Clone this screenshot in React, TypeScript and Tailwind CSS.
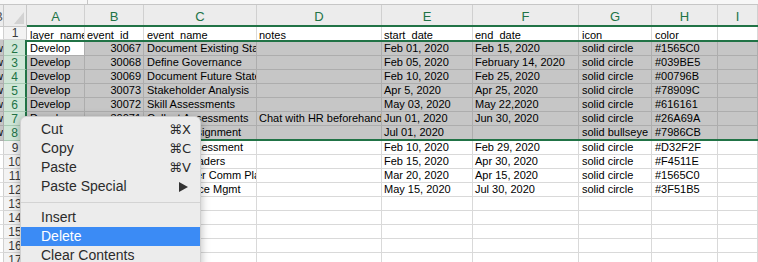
import React from 'react';

const W = ['w-[58px]', 'w-[59px]', 'w-[113px]', 'w-[125px]', 'w-[91px]', 'w-[106px]', 'w-[73px]', 'w-[66px]', 'flex-1'];
const PL = ['pl-[3px]', 'pl-[2px] pr-[2px]', 'pl-[3px]', 'pl-[2px]', 'pl-[2px]', 'pl-[2px]', 'pl-[3px]', 'pl-[3px]', 'pl-[2px]'];
const LETTERS = ['A', 'B', 'C', 'D', 'E', 'F', 'G', 'H', 'I'];

const HEAD = ['layer_name', 'event_id', 'event_name', 'notes', 'start_date', 'end_date', 'icon', 'color', ''];

const SELECTED: string[][] = [
    ['Develop', '30067', 'Document Existing State', '', 'Feb 01, 2020', 'Feb 15, 2020', 'solid circle', '#1565C0', ''],
    ['Develop', '30068', 'Define Governance', '', 'Feb 05, 2020', 'February 14, 2020', 'solid circle', '#039BE5', ''],
    ['Develop', '30069', 'Document Future State', '', 'Feb 10, 2020', 'Feb 25, 2020', 'solid circle', '#00796B', ''],
    ['Develop', '30073', 'Stakeholder Analysis', '', 'Apr 5, 2020', 'Apr 25, 2020', 'solid circle', '#78909C', ''],
    ['Develop', '30072', 'Skill Assessments', '', 'May 03, 2020', 'May 22,2020', 'solid circle', '#616161', ''],
    ['Develop', '30071', 'Collect Assessments', 'Chat with HR beforehand', 'Jun 01, 2020', 'Jun 30, 2020', 'solid circle', '#26A69A', ''],
    ['Develop', '30074', 'Mentor Assignment', '', 'Jul 01, 2020', '', 'solid bullseye', '#7986CB', ''],
];

const REST: string[][] = [
    ['Develop', '30075', 'Career Assessment', '', 'Feb 10, 2020', 'Feb 29, 2020', 'solid circle', '#D32F2F', ''],
    ['Develop', '30076', 'Identify Leaders', '', 'Feb 15, 2020', 'Apr 30, 2020', 'solid circle', '#F4511E', ''],
    ['Develop', '30077', 'Stakeholder Comm Plan', '', 'Mar 20, 2020', 'Apr 15, 2020', 'solid circle', '#1565C0', ''],
    ['Develop', '30078', 'Performance Mgmt', '', 'May 15, 2020', 'Jul 30, 2020', 'solid circle', '#3F51B5', ''],
    ['', '', '', '', '', '', '', '', ''],
    ['', '', '', '', '', '', '', '', ''],
    ['', '', '', '', '', '', '', '', ''],
    ['', '', '', '', '', '', '', '', ''],
    ['', '', '', '', '', '', '', '', ''],
];

const MENU = [
    { label: 'Cut', key: '⌘X' },
    { label: 'Copy', key: '⌘C' },
    { label: 'Paste', key: '⌘V' },
    { label: 'Paste Special', sub: true },
    { sep: true },
    { label: 'Insert' },
    { label: 'Delete', active: true },
    { label: 'Clear Contents' },
];

type Kind = 'first' | 'mid' | 'last' | 'plain' | 'head';

const Row: React.FC<{ num: number; cells: string[]; kind: Kind }> = ({ num, cells, kind }) => {
    const sel = kind === 'first' || kind === 'mid' || kind === 'last';
    const h = kind === 'first' ? 'h-[16px]' : kind === 'last' ? 'h-[15px]' : kind === 'head' ? 'h-[13px]' : 'h-[14px]';
    const body =
        kind === 'first'
            ? 'border-t-2 border-t-[#217346] border-b border-b-[#adadad] bg-[#c6c6c6]'
            : kind === 'mid'
            ? 'border-b border-b-[#adadad] bg-[#c6c6c6]'
            : kind === 'last'
            ? 'border-b-2 border-b-[#217346] bg-[#c6c6c6]'
            : kind === 'head'
            ? 'bg-white'
            : 'border-b border-b-[#d9d9d9] bg-white';
    return (
        <div className={`flex ${h}`}>
            <div
                className={`w-[4px] shrink-0 overflow-hidden border-r flex justify-end ${
                    sel ? 'bg-[#c6c6c6] border-[#adadad] border-b border-b-[#adadad]' : 'border-[#d0d0d0] border-b border-b-[#dcdcdc]'
                } ${kind === 'first' ? 'pt-[2px]' : ''}`}
            >
                {sel && <span className="leading-[13px]">w</span>}
            </div>
            <div
                className={`w-[23px] shrink-0 flex items-center justify-center text-[12px] ${kind === 'first' ? 'pt-[2px]' : ''} ${
                    sel
                        ? 'bg-[#cfe6d7] text-[#217346] border-r-2 border-[#217346] border-b border-b-[#a8cbb4]'
                        : 'bg-[#f3f3f3] text-[#3a3a3a] border-r border-[#c8c8c8] border-b border-b-[#d4d4d4]'
                }`}
            >
                {num}
            </div>
            <div className={`flex flex-1 ${body}`}>
                {cells.map((c, i) => (
                    <div
                        key={i}
                        className={`${W[i]} ${PL[i]} h-full shrink-0 overflow-hidden whitespace-nowrap border-r leading-[13px] ${
                            sel ? 'border-[#adadad]' : 'border-[#d9d9d9]'
                        } ${i === 1 && kind !== 'head' ? 'text-right' : ''} ${kind === 'first' && i === 0 ? 'bg-white' : ''} ${
                            kind === 'head' ? 'pt-[2px]' : ''
                        }`}
                    >
                        {c}
                    </div>
                ))}
            </div>
        </div>
    );
};

const ContextMenu: React.FC = () => (
    <div className="absolute left-[20px] top-[116px] w-[181px] h-[160px] rounded-t-[6px] bg-[#ececec] border border-[#cfcfcf] shadow-[0_2px_10px_rgba(0,0,0,0.28)] pt-[3px] font-['Liberation_Sans','DejaVu_Sans',sans-serif] text-[14px] text-[#2b2b2b]">
        {MENU.map((m, i) =>
            m.sep ? (
                <div key={i} className="h-[12px] flex items-center">
                    <div className="h-px w-full bg-[#d3d3d3]" />
                </div>
            ) : (
                <div
                    key={i}
                    className={`h-[19px] flex items-center justify-between pl-[20px] pr-[9px] ${m.active ? 'bg-[#3b8bf5] text-white' : ''}`}
                >
                    <span>{m.label}</span>
                    {m.key && <span className="font-['DejaVu_Sans','Liberation_Sans',sans-serif] text-[13px] text-[#2a2a2a]">{m.key}</span>}
                    {m.sub && (
                        <svg width="9" height="10" viewBox="0 0 9 10" className="mr-[3px]">
                            <polygon points="0,0 9,5 0,10" fill="#333" />
                        </svg>
                    )}
                </div>
            )
        )}
    </div>
);

const App: React.FC = () => {
    return (
        <div className="relative w-[758px] h-[262px] overflow-hidden bg-white font-['Liberation_Sans',Arial,sans-serif] text-[11px] text-black">
            {/* strip above the headers */}
            <div className="flex h-[5px] border-b border-[#c6c6c6] bg-[#f7f7f7]">
                <div className="w-[88px] border-r border-[#c6c6c6]" />
            </div>

            {/* column headers */}
            <div className="flex h-[22px]">
                <div className="w-[4px] shrink-0 overflow-hidden border-r border-[#c8c8c8] bg-[#ececec] border-b border-b-[#c8c8c8] flex justify-end pt-[4px] text-[13px] text-[#555]">
                    <span className="leading-[16px]">B</span>
                </div>
                <div className="relative w-[23px] shrink-0 bg-[#ececec] border-r border-[#c8c8c8] border-b border-b-[#c8c8c8]">
                    <svg width="10" height="12" viewBox="0 0 10 12" className="absolute right-[2px] bottom-[2px]">
                        <polygon points="10,0 10,12 0,12" fill="#d2d2d2" />
                    </svg>
                </div>
                <div className="flex flex-1 bg-[#ececec] border-b-2 border-[#217346]">
                    {LETTERS.map((l, i) => (
                        <div key={l} className={`${W[i]} shrink-0 h-full flex items-center justify-center pt-[4px] border-r border-[#d0d0d0] text-[13px] text-[#217346]`}>
                            {l}
                        </div>
                    ))}
                </div>
            </div>

            <Row num={1} cells={HEAD} kind="head" />
            {SELECTED.map((r, i) => (
                <Row key={i} num={i + 2} cells={r} kind={i === 0 ? 'first' : i === SELECTED.length - 1 ? 'last' : 'mid'} />
            ))}
            {REST.map((r, i) => (
                <Row key={i} num={i + 9} cells={r} kind="plain" />
            ))}

            <ContextMenu />
        </div>
    );
};

export default App;
